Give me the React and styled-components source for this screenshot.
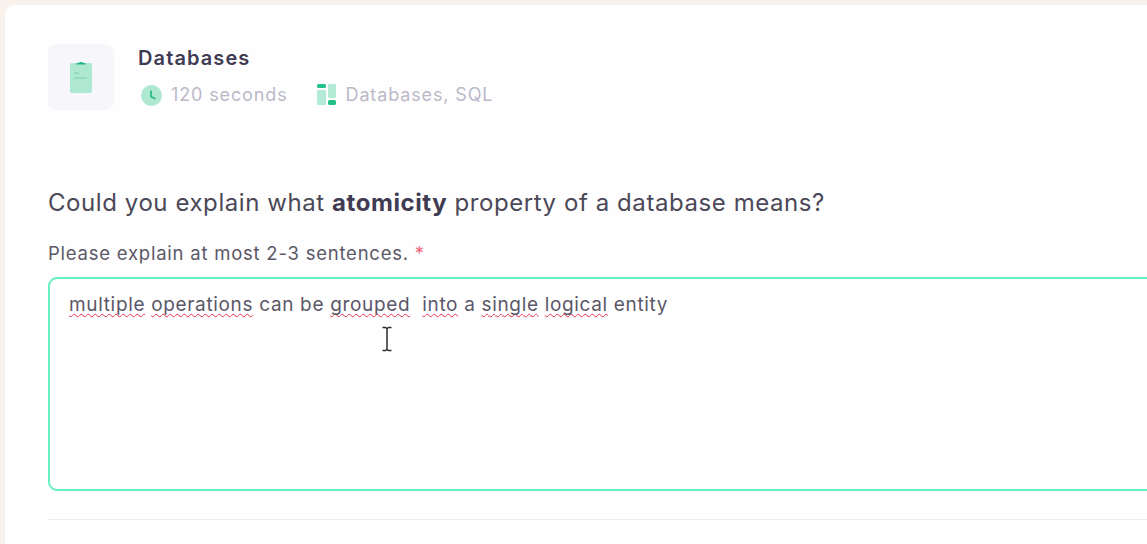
import React from "react";
import styled, { createGlobalStyle } from "styled-components";

const Global = createGlobalStyle`
  html, body { margin: 0; padding: 0; height: 100%; overflow: hidden; background: #f9f1ec; }
  body { font-family: "Inter", "Liberation Sans", sans-serif; }
`;
const Page = styled.div`
  width: 1147px; height: 544px; overflow: hidden; padding: 5px 0 0 5px; box-sizing: border-box; background: #f9f1ec;
`;
const Card = styled.main`
  width: 1240px; height: 600px; box-sizing: border-box; background: #fefefe; border-radius: 9px;
  padding: 39px 0 0 43px;
`;
const Header = styled.header`
  display: flex; gap: 24px; align-items: flex-start;
`;
const Tile = styled.div`
  width: 66px; height: 66px; border-radius: 9px; background: #f6f6fb;
  display: flex; align-items: center; justify-content: center;
`;
const HeadText = styled.div`
  display: flex; flex-direction: column; padding-top: 3px;
`;
const Title = styled.h2`
  margin: 0; font-size: 20px; line-height: 23px; font-weight: 600; color: #3f3b52; letter-spacing: 1.1px;
`;
const Meta = styled.div`
  display: flex; align-items: center; gap: 29px; margin-top: 13px; padding-left: 3px;
`;
const MetaItem = styled.span`
  display: flex; align-items: center; gap: 9px; font-size: 18px; line-height: 24px; color: #bcb9c9; letter-spacing: 0.87px;
`;
const Question = styled.h1`
  margin: 78px 0 0; font-size: 24px; line-height: 30px; font-weight: 400; color: #4b4858; letter-spacing: 0.57px;
  b { font-weight: 700; color: #3f3b52; }
`;
const Label = styled.label`
  display: block; margin-top: 23px; font-size: 18.5px; line-height: 24px; color: #5b5868; letter-spacing: 0.77px;
  span { color: #f0667a; }
`;
const Field = styled.div`
  position: relative; width: 1160px; height: 214px; margin-top: 12px; box-sizing: border-box;
  border: 2px solid #66eec4; border-radius: 9px; background: #fff;
  padding: 14px 19px; font-size: 19px; line-height: 24px; color: #5a5768; letter-spacing: 0.66px; white-space: pre;
`;
const Miss = styled.span`
  text-decoration: underline wavy #e8324a 1px; text-underline-offset: 2px; text-decoration-skip-ink: none;
`;
const Cursor = styled.svg`
  position: absolute; left: 331px; top: 47px;
`;
const Divider = styled.hr`
  width: 1160px; margin: 28px 0 0; border: 0; border-top: 1px solid #efeeef;
`;

export default function App() {
  return (
    <Page>
      <Global />
      <Card>
        <Header>
          <Tile>
            <svg width="24" height="34" viewBox="0 0 24 34">
              <rect x="1" y="3" width="22" height="30" rx="2" fill="#aee8d2" />
              <path d="M7 4.5c0-1.2 1-1.7 3-1.7.4-1.2 3.6-1.2 4 0 2 0 3 .5 3 1.7z" fill="#25b883" />
              <path d="M5 13h5M5 18h13" stroke="#8ed8bd" strokeWidth="1.6" />
            </svg>
          </Tile>
          <HeadText>
            <Title>Databases</Title>
            <Meta>
              <MetaItem>
                <svg width="21" height="21" viewBox="0 0 21 21">
                  <circle cx="10.5" cy="10.5" r="10.5" fill="#aee8d2" />
                  <path d="M10 5.5v6l4.5 2.5" fill="none" stroke="#25b883" strokeWidth="1.7" />
                </svg>
                120 seconds
              </MetaItem>
              <MetaItem>
                <svg width="20" height="22" viewBox="0 0 20 22">
                  <rect x="0" y="0" width="9" height="4" rx="1.5" fill="#25c088" />
                  <rect x="0" y="6" width="9" height="15" rx="1" fill="#b4ebd7" />
                  <rect x="11" y="0" width="8" height="14" rx="1" fill="#b4ebd7" />
                  <rect x="11" y="16" width="8" height="5" rx="1.5" fill="#25c088" />
                </svg>
                Databases, SQL
              </MetaItem>
            </Meta>
          </HeadText>
        </Header>
        <Question>Could you explain what <b>atomicity</b> property of a database means?</Question>
        <Label>Please explain at most 2-3 sentences. <span>*</span></Label>
        <Field>
          <Miss>multiple</Miss> <Miss>operations</Miss> can be <Miss>grouped</Miss>  <Miss>into</Miss> a <Miss>single</Miss> <Miss>logical</Miss> entity
          <Cursor width="12" height="26" viewBox="0 0 12 26">
            <path d="M1.5 1.5h3l1.5 1 1.5-1h3M6 3v20M1.5 24.5h3l1.5-1 1.5 1h3" fill="none" stroke="#2c2c2c" strokeWidth="1.5" />
          </Cursor>
        </Field>
        <Divider />
      </Card>
    </Page>
  );
}
